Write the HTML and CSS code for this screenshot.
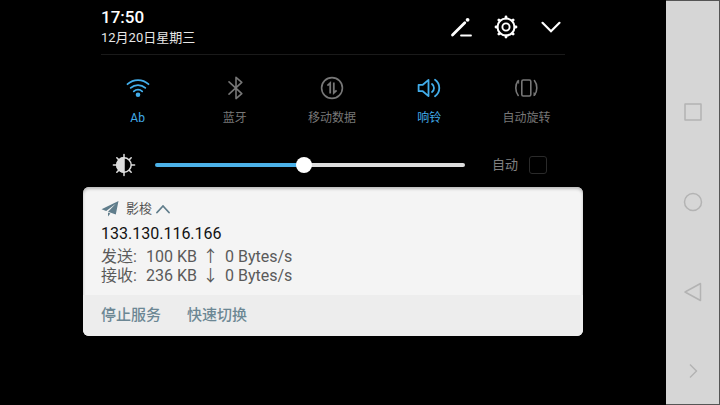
FILE: index.html
```html
<!DOCTYPE html>
<html lang="zh-CN">
<head>
    <meta charset="UTF-8">
    <meta name="viewport" content="width=device-width, initial-scale=1.0">
    <title>影梭</title>
    <link rel="stylesheet" href="styles.css">
</head>
<body>
    <main class="shade">
        <header class="header">
            <div class="clock">
                <div class="time">17:50</div>
                <div class="date">12月20日星期三</div>
            </div>
            <div class="tools">
                <button class="icon-btn" aria-label="编辑">
                    <svg width="24" height="24" viewBox="0 0 24 24" fill="none" stroke="#fff" stroke-linecap="round">
                        <path d="M3.5 20 15.8 7.8" stroke-width="2.8"/>
                        <path d="M18.6 4.8v0" stroke-width="3.8"/>
                        <path d="M12 20.5h10" stroke-width="1.8"/>
                    </svg>
                </button>
                <button class="icon-btn" aria-label="设置">
                    <svg width="24" height="24" viewBox="0 0 24 24" fill="none" stroke="#fff" stroke-linecap="round">
                        <circle cx="12" cy="12" r="8.5" stroke-width="2"/>
                        <circle cx="12" cy="12" r="3.6" stroke-width="1.9"/>
                        <path d="M12 2v1M12 21v1M2 12h1M21 12h1M4.9 4.9l.7.7M18.4 18.4l.7.7M4.9 19.1l.7-.7M18.4 5.6l.7-.7" stroke-width="2.8"/>
                    </svg>
                </button>
                <button class="icon-btn" aria-label="收起">
                    <svg width="24" height="24" viewBox="0 0 24 24" fill="none" stroke="#fff" stroke-width="2.2" stroke-linecap="round">
                        <path d="M3.5 7.8 12 16.2l8.5-8.4"/>
                    </svg>
                </button>
            </div>
        </header>

        <section class="tiles">
            <button class="tile on">
                <svg width="24" height="24" viewBox="0 0 24 24" fill="none" stroke="currentColor" stroke-width="1.8" stroke-linecap="round">
                    <path d="M1.5 8.2a15.5 15.5 0 0 1 21 0M4.7 11.9a10.8 10.8 0 0 1 14.6 0M7.8 15.3a6.2 6.2 0 0 1 8.4 0"/>
                    <circle cx="12" cy="18.8" r="2.3" fill="currentColor" stroke="none"/>
                </svg>
                <span>Ab</span>
            </button>
            <button class="tile">
                <svg width="24" height="24" viewBox="0 0 24 24" fill="none" stroke="currentColor" stroke-width="1.6" stroke-linejoin="round" stroke-linecap="round">
                    <path d="M6 5.8 18.8 17.6l-5.8 5V1.4l5.8 5L6 18.2"/>
                </svg>
                <span>蓝牙</span>
            </button>
            <button class="tile">
                <svg width="24" height="24" viewBox="0 0 24 24" fill="none" stroke="currentColor" stroke-width="1.6">
                    <circle cx="12" cy="12" r="10.4"/>
                    <path d="M10.2 17.5V7L7.4 9.6M13.8 6.5V17l2.8-2.6" stroke-width="1.8"/>
                </svg>
                <span>移动数据</span>
            </button>
            <button class="tile on">
                <svg width="24" height="24" viewBox="0 0 24 24" fill="none" stroke="currentColor" stroke-width="1.8" stroke-linejoin="round" stroke-linecap="round">
                    <path d="M1.6 8.8h4.2l5.7-4.9v16.2l-5.7-4.9H1.6z"/>
                    <path d="M15 8a5 5 0 0 1 0 8M18 3.8a10 10 0 0 1 0 16.4"/>
                </svg>
                <span>响铃</span>
            </button>
            <button class="tile">
                <svg width="24" height="24" viewBox="0 0 24 24" fill="none" stroke="currentColor" stroke-width="1.6" stroke-linecap="round">
                    <rect x="7.8" y="4" width="9" height="16" rx="1.4"/>
                    <path d="M4.2 19.4C1 15.5 1 8.5 4.2 4.8M20.4 4.6c3.2 3.9 3.2 10.9 0 14.6"/>
                    <path d="M4.8 4.4v3.2L3 6zM19.8 19.6v-3.2l1.8 1.6z" fill="currentColor" stroke-width=".5"/>
                </svg>
                <span>自动旋转</span>
            </button>
        </section>

        <section class="brightness">
            <svg width="24" height="24" viewBox="0 0 24 24" fill="none" stroke="#ddd" stroke-width="1.5" stroke-linecap="round">
                <circle cx="12" cy="12" r="7.2"/>
                <path d="M12 4.8a7.2 7.2 0 0 0 0 14.4z" fill="#ddd"/>
                <path d="M12 1.4v3M12 19.6v3M1.4 12h3M19.6 12h3M4.8 4.8l1.6 1.6M17.6 17.6l1.6 1.6M4.8 19.2l1.6-1.6M17.6 6.4l1.6-1.6"/>
            </svg>
            <input class="slider" type="range" min="0" max="100" value="48" aria-label="亮度">
            <label class="auto" for="auto">自动</label>
            <input class="check" type="checkbox" id="auto">
        </section>

        <article class="card">
            <div class="card-body">
                <div class="app">
                    <svg width="18" height="18" viewBox="0 0 18 18" fill="#607d8b">
                        <path d="M17.5 1 .5 9.200l4.700 1.700L14.800 3.800 7 11.700l7.800 2.800z"/>
                        <path d="M7 12.500v4l2.400-3z"/>
                    </svg>
                    <span class="app-name">影梭</span>
                    <svg width="14" height="14" viewBox="0 0 14 14" fill="none" stroke="#607d8b" stroke-width="1.8" stroke-linecap="round">
                        <path d="M1 10.500l6-6.500 6 6.500"/>
                    </svg>
                </div>
                <h1 class="title">133.130.116.166</h1>
                <div class="stats">
                    <span>发送:</span><span>100 KB</span><span class="arrow">↑</span><span>0 Bytes/s</span>
                    <span>接收:</span><span>236 KB</span><span class="arrow">↓</span><span>0 Bytes/s</span>
                </div>
            </div>
            <div class="actions">
                <button class="action">停止服务</button>
                <button class="action">快速切换</button>
            </div>
        </article>
    </main>

    <nav class="navbar">
        <button class="nav-btn" aria-label="最近任务">
            <svg width="20" height="20" viewBox="0 0 20 20"><rect x="2" y="2" width="16" height="16"/></svg>
        </button>
        <button class="nav-btn" aria-label="主屏幕">
            <svg width="20" height="20" viewBox="0 0 20 20"><circle cx="10" cy="10" r="8.5"/></svg>
        </button>
        <button class="nav-btn" aria-label="返回">
            <svg width="20" height="20" viewBox="0 0 20 20"><path d="M17.5 1.500v17L2 10z"/></svg>
        </button>
        <button class="nav-btn nav-hide" aria-label="隐藏导航栏">
            <svg width="20" height="20" viewBox="0 0 20 20"><path d="M7 3.500l6.500 6.500L7 16.500"/></svg>
        </button>
    </nav>
</body>
</html>
```
FILE: styles.css
```css
* {
    box-sizing: border-box;
}

body {
    margin: 0;
    min-height: 100vh;
    display: flex;
    background-color: #000;
    color: #fff;
    font-family: Roboto, "Noto Sans CJK SC", sans-serif;
}

button {
    padding: 0;
    border: none;
    background: none;
    color: inherit;
    font: inherit;
    cursor: pointer;
}

svg {
    display: block;
    flex: none;
}

.shade {
    flex: 1;
    display: flex;
    flex-direction: column;
    padding: 0 83px;
}

/* Clock and shortcuts */
.header {
    display: flex;
    justify-content: space-between;
    align-items: center;
    height: 55px;
    margin: 0 18px;
    border-bottom: 1px solid #1a1a1a;
}

.time {
    font-size: 17px;
    font-weight: 500;
    line-height: 20px;
}

.date {
    font-size: 13px;
    line-height: 21px;
    color: #e6e6e6;
}

.tools {
    display: flex;
    gap: 21px;
    padding-right: 2px;
}

/* Quick toggles */
.tiles {
    display: grid;
    grid-template-columns: repeat(5, 1fr);
    padding: 21px 8px 0 6px;
}

.tile {
    display: flex;
    flex-direction: column;
    align-items: center;
    gap: 8px;
    font-size: 12px;
    line-height: 20px;
    color: #777;
}

.tile.on {
    color: #42adea;
}

/* Brightness row */
.brightness {
    display: flex;
    align-items: center;
    height: 24px;
    margin-top: 25px;
    padding: 0 36px 0 29px;
}

.slider {
    flex: 1;
    min-width: 0;
    height: 16px;
    margin: 0 27px 0 19px;
    background: none;
    appearance: none;
}

.slider::-webkit-slider-runnable-track {
    height: 4px;
    border-radius: 2px;
    background: linear-gradient(to right, #4bb1e8 48%, #ddd 48%);
}

.slider::-webkit-slider-thumb {
    width: 16px;
    height: 16px;
    margin-top: -6px;
    border-radius: 50%;
    background-color: #fff;
    appearance: none;
}

.auto {
    font-size: 13px;
    line-height: 20px;
    color: #808080;
}

.check {
    width: 18px;
    height: 18px;
    margin: 0 0 0 11px;
    border: 1px solid #2a2a2a;
    border-radius: 3px;
    appearance: none;
}

.check:checked {
    background-color: #42adea;
}

/* Notification */
.card {
    margin-top: 10px;
    border-radius: 6px;
    overflow: hidden;
    background-color: #f4f4f4;
    box-shadow: inset 0 2px 3px #bbb;
}

.card-body {
    padding: 12px 18px 10px;
}

.app {
    display: flex;
    align-items: center;
    height: 20px;
    color: #555;
}

.app-name {
    margin: 0 4px 0 7px;
    font-size: 13px;
    line-height: 20px;
}

.title {
    margin: 5px 0 3px;
    font-size: 16px;
    font-weight: 400;
    line-height: 20px;
    color: #111;
}

.stats {
    display: grid;
    grid-template-columns: 45px 54px auto 1fr;
    font-size: 16px;
    line-height: 19px;
    color: #5a5a5a;
}

.arrow {
    width: 25px;
    padding-right: 4px;
    text-align: center;
}

.actions {
    display: flex;
    gap: 26px;
    padding: 0 18px;
    background-color: #ededed;
}

.action {
    font-size: 15px;
    font-weight: 500;
    line-height: 41px;
    color: #6c8794;
}

/* Navigation bar */
.navbar {
    flex: none;
    display: flex;
    flex-direction: column;
    justify-content: flex-end;
    width: 54px;
    border: 1px solid #555;
    border-left: none;
    background-color: #d6d6d6;
}

.nav-btn {
    display: flex;
    align-items: center;
    justify-content: center;
    height: 90px;
}

.nav-btn svg {
    fill: none;
    stroke: #b3b3b3;
    stroke-width: 1.5;
    stroke-linejoin: round;
}

.nav-hide {
    height: 67px;
}
```
